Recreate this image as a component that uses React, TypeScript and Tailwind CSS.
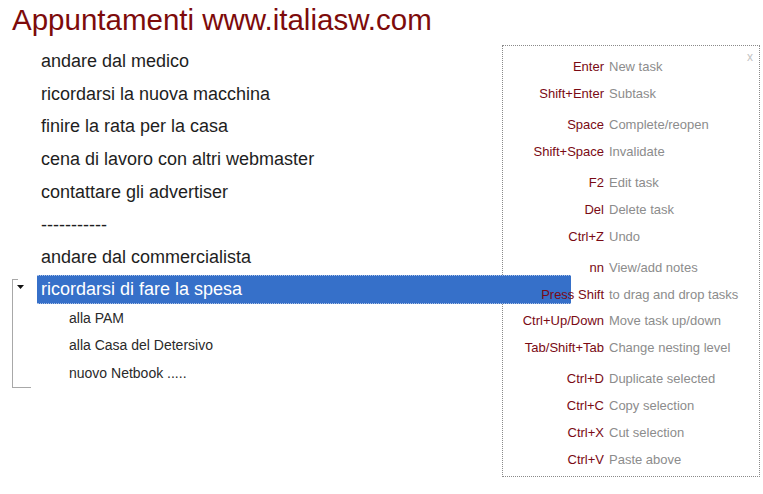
import { Fragment } from "react";

const tasks = [
  "andare dal medico",
  "ricordarsi la nuova macchina",
  "finire la rata per la casa",
  "cena di lavoro con altri webmaster",
  "contattare gli advertiser",
  "-----------",
  "andare dal commercialista",
];

const subtasks = ["alla PAM", "alla Casa del Detersivo", "nuovo Netbook ....."];

const shortcuts: [string, string][][] = [
  [
    ["Enter", "New task"],
    ["Shift+Enter", "Subtask"],
  ],
  [
    ["Space", "Complete/reopen"],
    ["Shift+Space", "Invalidate"],
  ],
  [
    ["F2", "Edit task"],
    ["Del", "Delete task"],
    ["Ctrl+Z", "Undo"],
  ],
  [
    ["nn", "View/add notes"],
    ["Press Shift", "to drag and drop tasks"],
    ["Ctrl+Up/Down", "Move task up/down"],
    ["Tab/Shift+Tab", "Change nesting level"],
  ],
  [
    ["Ctrl+D", "Duplicate selected"],
    ["Ctrl+C", "Copy selection"],
    ["Ctrl+X", "Cut selection"],
    ["Ctrl+V", "Paste above"],
  ],
];

function HelpPanel() {
  return (
    <div className="absolute left-[502px] top-[45px] w-[258px] h-[432px] border border-dotted border-[#8a8a8a] pt-[7.5px]">
      <span className="absolute right-[6px] top-[2px] text-[12px] text-[#c4c4c4] z-20">x</span>
      {shortcuts.map((group, gi) => (
        <div key={gi} className={gi > 0 ? "mt-[4.5px]" : ""}>
          {group.map(([key, desc]) => (
            <div key={key} className="relative z-20 flex items-center h-[26.75px] text-[13px]">
              <span className="w-[101px] text-right text-[#7a0a14]">{key}</span>
              <span className="pl-[5px] text-[#8c8c8c] whitespace-nowrap">{desc}</span>
            </div>
          ))}
        </div>
      ))}
    </div>
  );
}

export default function App() {
  return (
    <div className="relative w-[763px] h-[494px] bg-white font-['Liberation_Sans',Arial,sans-serif] overflow-hidden">
      <h1 className="pl-[12px] pt-[3px] h-[45px] text-[29.5px] leading-[34px] text-[#7d0b0b] font-normal">
        Appuntamenti www.italiasw.com
      </h1>
      <div className="ml-[37px]">
        {tasks.map((t, i) => (
          <div key={i} className="h-[32.75px] flex items-center pl-[4px] text-[18px] text-[#1e1e1e]">
            {t}
          </div>
        ))}
      </div>
      <div className="flex">
        <div className="w-[37px] pl-[12px] pt-[5px]">
          <div className="h-[109px] border-l border-[#a8a8a8] flex flex-col">
            <div className="h-px w-[5px] bg-[#a8a8a8]" />
            <svg width="8" height="5" viewBox="0 0 8 5" className="ml-[4px] mt-[5px]">
              <path d="M0 0 H7 L3.5 4 Z" fill="#111" />
            </svg>
            <div className="flex-1" />
            <div className="h-px w-[18px] bg-[#a8a8a8]" />
          </div>
        </div>
        <div className="flex-1">
          <div className="relative z-10 mt-[1px] h-[29px] w-[534px] flex items-center pl-[4px] bg-[#3670c9] border-y border-dotted border-[#a9c0e6] text-[18px] text-white">
            ricordarsi di fare la spesa
          </div>
          {subtasks.map((s) => (
            <Fragment key={s}>
              <div className="h-[27.5px] flex items-center pl-[32px] text-[14px] text-[#2a2a2a] first:mt-[0.5px]">{s}</div>
            </Fragment>
          ))}
        </div>
      </div>
      <HelpPanel />
    </div>
  );
}
